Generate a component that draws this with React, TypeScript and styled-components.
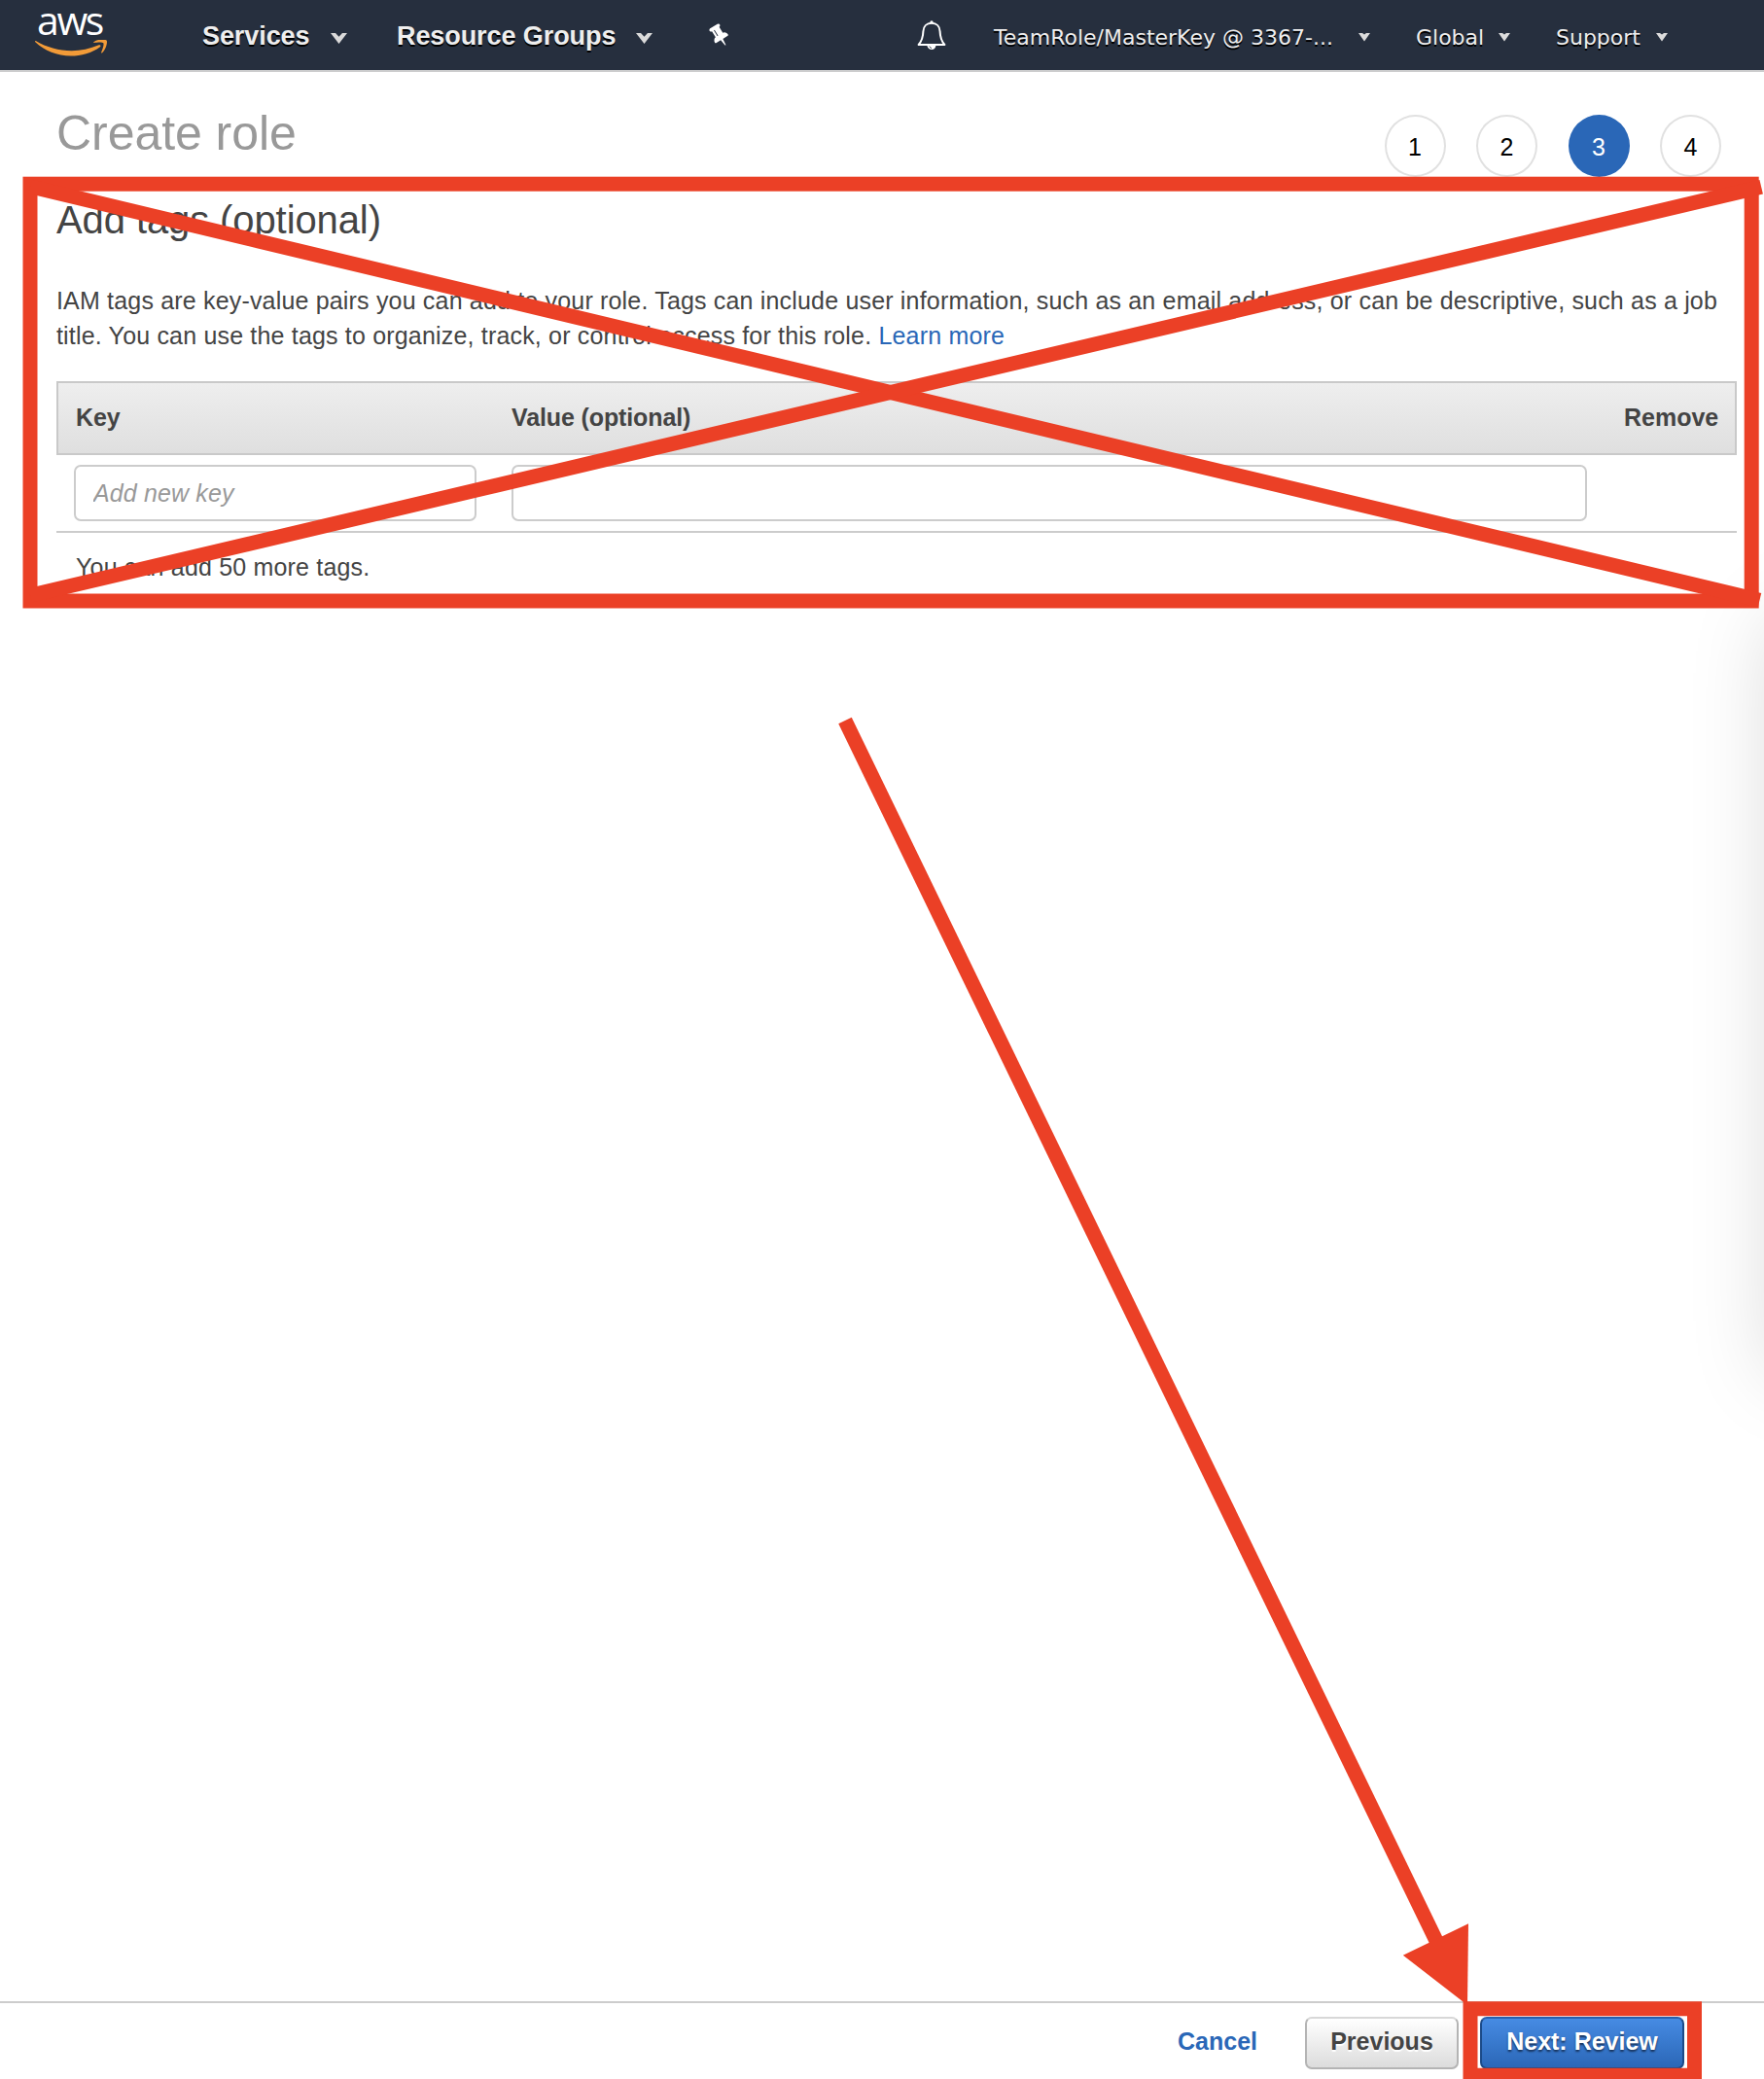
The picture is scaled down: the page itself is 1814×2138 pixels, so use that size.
import React from "react";
import styled, { createGlobalStyle, css } from "styled-components";

const RED = "#eb4026";
const BLUE = "#2a67b7";
const SANS = `"Liberation Sans", Arial, sans-serif`;

const GlobalStyle = createGlobalStyle`
  *, *::before, *::after { box-sizing: border-box; }
  html, body { margin: 0; padding: 0; background: #fff; }
`;

const Page = styled.div`
  position: relative;
  display: flex;
  flex-direction: column;
  width: 1814px;
  height: 2138px;
  overflow: hidden;
  background: #fff;
  color: #444;
  font: 25px/36px ${SANS};
`;

/* ---- top navigation ---- */

const NavBar = styled.header`
  display: flex;
  align-items: stretch;
  height: 74px;
  flex: none;
  padding-left: 36px;
  background: #262f3e;
  border-bottom: 2px solid #cbcccd;
`;

const Logo = styled.div`
  width: 74px;
  margin-right: 98px;
  display: flex;
  flex-direction: column;
  svg { display: block; width: 74px; height: 17px; }
`;

const LogoWord = styled.span`
  height: 41px;
  padding-left: 2px;
  color: #fff;
  font: 500 41px/41px "Open Sans", "Noto Sans", sans-serif;
  letter-spacing: -2.4px;
`;

const NavItem = styled.div<{ $gap: number; $after: number; $small?: boolean }>`
  display: flex;
  align-items: center;
  gap: ${(p) => p.$gap}px;
  margin-right: ${(p) => p.$after}px;
  color: #eee;
  white-space: nowrap;
  text-shadow: 0 2px 0 #000;
  ${(p) =>
    p.$small
      ? css`
          padding-top: 6px;
          font: 22px/30px "DejaVu Sans", Verdana, sans-serif;
          svg { margin-bottom: 2px; }
        `
      : css`
          padding-top: 1px;
          font: bold 27px/36px ${SANS};
          letter-spacing: -0.08px;
          svg { margin-top: 5px; }
        `}
  svg { flex: none; display: block; }
`;

const NavLabel = styled.span<{ $width: number }>`
  width: ${(p) => p.$width}px;
`;

const NavIcon = styled.div<{ $after: number }>`
  display: flex;
  align-items: center;
  margin-right: ${(p) => p.$after}px;
  svg { display: block; }
`;

const LargeCaret = () => (
  <svg width="17" height="11" viewBox="0 0 17 11">
    <path d="M0 0H5L8.5 3.8L12 0H17L8.5 11Z" fill="#dadada" />
  </svg>
);

const SmallCaret = () => (
  <svg width="12" height="9" viewBox="0 0 12 9">
    <path d="M0 0H4L6 1.6L8 0H12L6 8.6Z" fill="#dcdcdc" />
  </svg>
);

const Pin = () => (
  <svg width="24" height="26" viewBox="0 0 24 26">
    <g transform="translate(11.6 13) rotate(-32) scale(.0138 -.0138) translate(-576 -640)">
      <path
        fill="#fff"
        d="M480 672v448q0 14 -9 23t-23 9t-23 -9t-9 -23v-448q0 -14 9 -23t23 -9t23 9t9 23zM1152 320q0 -26 -19 -45t-45 -19h-429l-51 -483q-2 -12 -10.5 -20.5t-20.5 -8.5h-1q-27 0 -32 27l-76 485h-404q-26 0 -45 19t-19 45q0 123 78.5 221.5t177.5 98.5v512q-52 0 -90 38t-38 90t38 90t90 38h640q52 0 90 -38t38 -90t-38 -90t-90 -38v-512q99 0 177.5 -98.5t78.5 -221.5z"
        fillRule="evenodd"
      />
    </g>
  </svg>
);

const Bell = () => (
  <svg width="30" height="31" viewBox="0 0 30 31">
    <path
      d="M15 2.8C9.8 2.8 6.6 6.2 6.4 11.2C6.2 17.6 5.2 20.8 1.6 25H28.4C24.8 20.8 23.8 17.6 23.6 11.2C23.4 6.2 20.2 2.8 15 2.8Z"
      fill="none"
      stroke="#fff"
      strokeWidth="2"
      strokeLinejoin="round"
    />
    <circle cx="15" cy="1.9" r="1.7" fill="#fff" />
    <path d="M10.4 26H19.4C19 28.6 17.4 30 15.2 30S11 28.6 10.4 26Z" fill="#fff" />
    <path d="M12.6 26.6L15 28.8" stroke="#262f3e" strokeWidth=".9" />
  </svg>
);

/* ---- wizard content ---- */

const Content = styled.main`
  flex: 1;
  padding: 33px 28px 0 58px;
`;

const Heading = styled.div`
  display: flex;
  justify-content: space-between;
  height: 75px;
  padding-right: 16px;
`;

const Title = styled.h1`
  margin: 0;
  color: #999;
  font: 400 50px/60px ${SANS};
  letter-spacing: -0.05px;
`;

const Steps = styled.ol`
  display: flex;
  gap: 31.5px;
  margin: 11px 0 0;
  padding: 0;
  list-style: none;
`;

const Step = styled.li<{ $active: boolean }>`
  display: flex;
  align-items: center;
  justify-content: center;
  width: 63px;
  height: 64px;
  padding-top: 2px;
  border-radius: 50%;
  border: 2px solid ${(p) => (p.$active ? BLUE : "#e1e1e1")};
  background: ${(p) => (p.$active ? BLUE : "#fff")};
  color: ${(p) => (p.$active ? "#fff" : "#000")};
`;

const Subtitle = styled.h2`
  margin: 19px 0 40px;
  font: 400 40px/50px ${SANS};
  letter-spacing: -0.1px;
`;

const Intro = styled.p`
  margin: 0 0 29px;
  white-space: nowrap;
  letter-spacing: 0.178px;
`;

const Link = styled.a`
  color: ${BLUE};
  text-decoration: none;
`;

const columns = css`
  display: grid;
  grid-template-columns: 414px 1106px 1fr;
  column-gap: 36px;
`;

const TableHead = styled.div`
  ${columns}
  grid-template-columns: 412px 1108px 1fr;
  align-items: center;
  height: 76px;
  padding: 0 18px 2px;
  border: 2px solid #c9c9c9;
  background: linear-gradient(#eee, #dfdfdf);
  font-weight: bold;
  letter-spacing: -0.12px;
  span:last-child { text-align: right; letter-spacing: 0; }
`;

const TableRow = styled.div`
  ${columns}
  padding: 10px 18px;
  border-bottom: 2px solid #ccc;
`;

const Field = styled.input`
  height: 58px;
  width: 100%;
  min-width: 0;
  padding: 0 18px;
  border: 2px solid #ccc;
  border-radius: 7px;
  outline: none;
  background: #fff;
  font: 25px ${SANS};
  letter-spacing: 0.13px;
  &::placeholder { color: #999; font-style: italic; opacity: 1; }
`;

const Hint = styled.p`
  margin: 17px 0 0 20px;
  letter-spacing: 0.178px;
`;

/* ---- footer ---- */

const Footer = styled.footer`
  display: flex;
  align-items: flex-start;
  flex: none;
  justify-content: flex-end;
  height: 80px;
  padding: 14px 82px 0 0;
  border-top: 2px solid #ccc;
  font-weight: bold;
`;

const Cancel = styled.a`
  margin-right: 49px;
  padding-bottom: 3px;
  line-height: 51px;
  color: ${BLUE};
`;

const Button = styled.button<{ $primary?: boolean }>`
  width: ${(p) => (p.$primary ? 210 : 158)}px;
  height: 54px;
  margin-left: ${(p) => (p.$primary ? 22 : 0)}px;
  padding: 0 0 4px;
  border-radius: 7px;
  white-space: nowrap;
  font: bold 25px/36px ${SANS};
  ${(p) =>
    p.$primary
      ? css`
          border: 2px solid #1b4a88;
          border-top-color: #2861ae;
          background: linear-gradient(#468be3, #2b67b7);
          color: #fff;
          text-shadow: 0 2px 2px #17335c;
        `
      : css`
          border: 2px solid #b4b4b4;
          border-top-color: #d8d8d8;
          background: linear-gradient(#fff, #dcdcdc);
          color: #444;
          text-shadow: 0 2px 1px #fff;
        `}
`;

/* ---- layers over the page ---- */

const SidePanelShadow = styled.div`
  position: absolute;
  left: 1822px;
  top: 636px;
  width: 400px;
  height: 778px;
  box-shadow: 0 0 80px rgba(0, 0, 0, 0.15);
  pointer-events: none;
`;

const Markup = styled.svg`
  position: absolute;
  inset: 0;
  pointer-events: none;
`;

const steps = [1, 2, 3, 4];

export default function App() {
  return (
    <Page>
      <GlobalStyle />
      <NavBar>
        <Logo>
          <LogoWord>aws</LogoWord>
          <svg viewBox="0 13.9 24 5.4" preserveAspectRatio="none">
            <path
              fill="#f29b38"
              d="M21.698 16.207c-2.626 1.94-6.442 2.969-9.722 2.969-4.598 0-8.74-1.7-11.87-4.526-.247-.223-.024-.527.272-.351 3.384 1.963 7.559 3.153 11.877 3.153 2.914 0 6.114-.607 9.06-1.852.439-.2.814.287.383.607zM22.792 14.961c-.336-.43-2.22-.207-3.074-.103-.255.032-.295-.192-.063-.36 1.5-1.053 3.967-.75 4.254-.399.287.36-.08 2.826-1.485 4.007-.215.184-.423.088-.327-.151.32-.79 1.03-2.57.695-2.994z"
            />
          </svg>
        </Logo>
        <NavItem $gap={20} $after={51}>
          <NavLabel $width={112}>Services</NavLabel>
          <LargeCaret />
        </NavItem>
        <NavItem $gap={20} $after={57}>
          <NavLabel $width={226}>Resource Groups</NavLabel>
          <LargeCaret />
        </NavItem>
        <NavIcon $after={191}>
          <Pin />
        </NavIcon>
        <NavIcon $after={49}>
          <Bell />
        </NavIcon>
        <NavItem $small $gap={26} $after={47}>
          <NavLabel $width={349}>TeamRole/MasterKey @ 3367-...</NavLabel>
          <SmallCaret />
        </NavItem>
        <NavItem $small $gap={16} $after={47}>
          <NavLabel $width={69}>Global</NavLabel>
          <SmallCaret />
        </NavItem>
        <NavItem $small $gap={16} $after={0}>
          <NavLabel $width={87}>Support</NavLabel>
          <SmallCaret />
        </NavItem>
      </NavBar>

      <Content>
        <Heading>
          <Title>Create role</Title>
          <Steps>
            {steps.map((n) => (
              <Step key={n} $active={n === 3}>
                {n}
              </Step>
            ))}
          </Steps>
        </Heading>
        <Subtitle>Add tags (optional)</Subtitle>
        <Intro>
          IAM tags are key-value pairs you can add to your role. Tags can include user information,
          such as an email address, or can be descriptive, such as a job
          <br />
          title. You can use the tags to organize, track, or control access for this role.{" "}
          <Link>Learn more</Link>
        </Intro>
        <TableHead>
          <span>Key</span>
          <span>Value (optional)</span>
          <span>Remove</span>
        </TableHead>
        <TableRow>
          <Field placeholder="Add new key" />
          <Field />
        </TableRow>
        <Hint>You can add 50 more tags.</Hint>
      </Content>

      <Footer>
        <Cancel>Cancel</Cancel>
        <Button>Previous</Button>
        <Button $primary>Next: Review</Button>
      </Footer>

      <SidePanelShadow />
      <Markup width="1814" height="2138" viewBox="0 0 1814 2138">
        <g fill="none" stroke={RED} strokeWidth="15">
          <rect x="31" y="189.2" width="1770.2" height="428.8" />
          <path d="M31 191.8L1809.5 617.3" />
          <path d="M31 612.3L1811.2 192.2" />
          <path d="M869 741L1478 1998" />
          <path d="M1512 2138V2065.7H1742.5V2138" />
          <path d="M1512 2134.2H1742.5" />
        </g>
        <path d="M1510 1978.3L1442.8 2010.7L1509 2062Z" fill={RED} />
      </Markup>
    </Page>
  );
}
